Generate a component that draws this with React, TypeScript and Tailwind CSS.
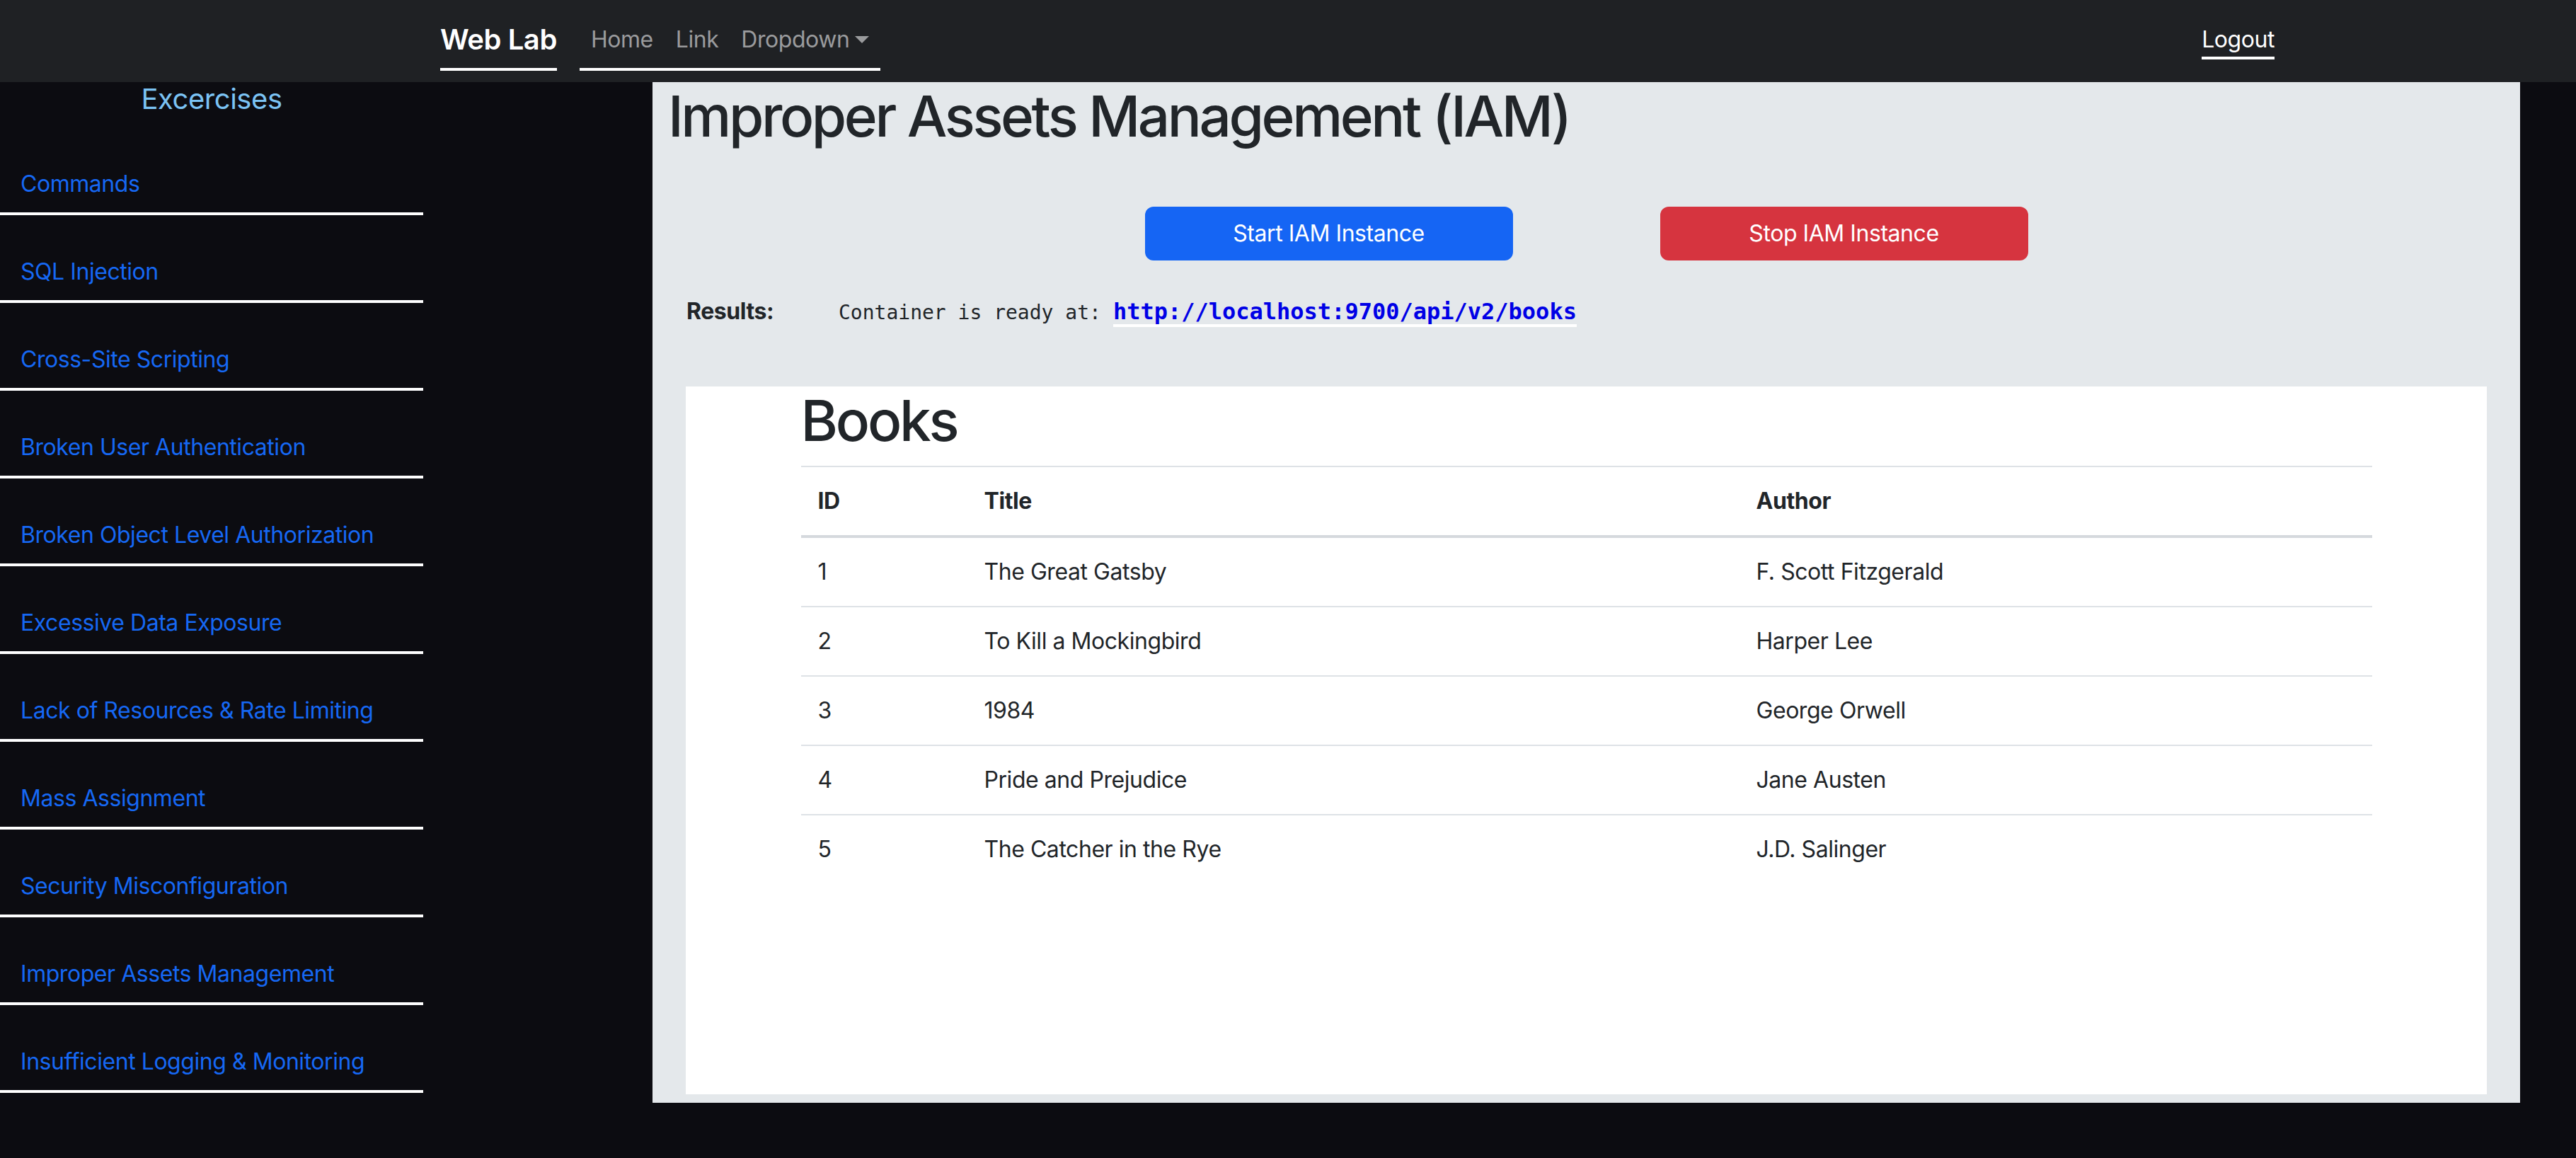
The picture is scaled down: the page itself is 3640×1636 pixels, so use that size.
import React from "react";

const exercises = [
  "Commands",
  "SQL Injection",
  "Cross-Site Scripting",
  "Broken User Authentication",
  "Broken Object Level Authorization",
  "Excessive Data Exposure",
  "Lack of Resources & Rate Limiting",
  "Mass Assignment",
  "Security Misconfiguration",
  "Improper Assets Management",
  "Insufficient Logging & Monitoring",
];

const books = [
  { id: 1, title: "The Great Gatsby", author: "F. Scott Fitzgerald" },
  { id: 2, title: "To Kill a Mockingbird", author: "Harper Lee" },
  { id: 3, title: "1984", author: "George Orwell" },
  { id: 4, title: "Pride and Prejudice", author: "Jane Austen" },
  { id: 5, title: "The Catcher in the Rye", author: "J.D. Salinger" },
];

const Navbar = () => (
  <nav className="h-[116px] bg-[#1f2124] py-[16px]">
    <div className="ml-[622px] w-[2592px] flex items-start justify-between">
      {/* left */}
      <div className="flex items-start">
        <div className="pt-[10px] pb-[10px] border-b-4 border-white text-[40px] leading-[60px] font-semibold text-white mr-[32px]">
          Web Lab
        </div>
        <ul className="flex border-b-4 border-white text-[32px] leading-[48px] text-[#9a9b9d]">
          <li className="px-[16px] py-[16px]">Home</li>
          <li className="px-[16px] py-[16px]">Link</li>
          <li className="px-[16px] py-[16px] flex items-center">
            Dropdown
            <span className="ml-[8px] w-0 h-0 border-l-[10px] border-r-[10px] border-t-[10px] border-l-transparent border-r-transparent border-t-[#9a9b9d]"></span>
          </li>
        </ul>
      </div>

      {/* right */}
      <div className="pt-[16px] text-[32px] leading-[48px] text-white border-b-4 border-white">
        Logout
      </div>
    </div>
  </nav>
);

const Sidebar = () => (
  <aside className="w-[598px] shrink-0">
    <h5 className="text-center text-[40px] leading-[48px] text-[#7bc3f4] mb-[16px]">
      Excercises
    </h5>
    <ul>
      {exercises.map((e, i) => (
        <li
          key={i}
          className="pt-[56px] pb-[16px] pl-[29px] text-[32px] leading-[48px] text-[#1668f4] border-b-4 border-white"
        >
          {e}
        </li>
      ))}
    </ul>
  </aside>
);

const BooksTable = () => (
  <div className="w-[2220px] mx-auto text-[#212529]">
    <h1 className="text-[80px] leading-[96px] font-medium tracking-[-0.04em] mb-[16px]">Books</h1>
    <table className="w-full border-separate border-spacing-0 text-[32px] leading-[48px] text-left">
      <thead>
        <tr>
          <th className="w-[235px] p-[24px] font-bold border-t-2 border-b-4 border-t-[#dee2e6] border-b-[#d5d9dd]">ID</th>
          <th className="w-[1091px] p-[24px] font-bold border-t-2 border-b-4 border-t-[#dee2e6] border-b-[#d5d9dd]">Title</th>
          <th className="p-[24px] font-bold border-t-2 border-b-4 border-t-[#dee2e6] border-b-[#d5d9dd]">Author</th>
        </tr>
      </thead>
      <tbody>
        {books.map((b, i) => {
          const line = i < books.length - 1 ? "border-b-2 border-[#dee2e6]" : "";
          return (
            <tr key={b.id}>
              <td className={`p-[24px] ${line}`}>{b.id}</td>
              <td className={`p-[24px] ${line}`}>{b.title}</td>
              <td className={`p-[24px] ${line}`}>{b.author}</td>
            </tr>
          );
        })}
      </tbody>
    </table>
  </div>
);

export default function App() {
  return (
    <div className="w-[3640px] h-[1636px] bg-[#0c0c11] font-[Inter,sans-serif] tracking-[-0.028em] overflow-hidden">
      <Navbar />
      <div className="flex">
        <Sidebar />

        <main className="ml-[324px] w-[2639px] bg-[#e4e8eb] pb-[12px] text-[#212529]">
          <h1 className="pl-[22px] text-[80px] leading-[96px] font-medium tracking-[-0.043em]">
            Improper Assets Management (IAM)
          </h1>

          <div className="mt-[80px] flex justify-center gap-[208px]">
            <button className="w-[520px] h-[76px] rounded-[12px] bg-[#1565f4] text-white text-[32px] leading-[48px]">
              Start IAM Instance
            </button>
            <button className="w-[520px] h-[76px] rounded-[12px] bg-[#d6343f] text-white text-[32px] leading-[48px]">
              Stop IAM Instance
            </button>
          </div>

          <div className="mt-[48px] pl-[48px] flex items-baseline text-[32px] leading-[48px]">
            <span className="w-[215px] font-bold">Results:</span>
            <code className="font-['DejaVu_Sans_Mono',monospace] tracking-normal text-[28px]">
              Container is ready at:
            </code>
            <a className="ml-[17px] inline-block font-['DejaVu_Sans_Mono',monospace] tracking-normal font-bold text-[32px] leading-[36px] text-[#0000e6] border-b-4 border-white">
              http://localhost:9700/api/v2/books
            </a>
          </div>

          <div className="mt-[80px] mx-[47px] h-[1000px] bg-white">
            <BooksTable />
          </div>
        </main>
      </div>
    </div>
  );
}
